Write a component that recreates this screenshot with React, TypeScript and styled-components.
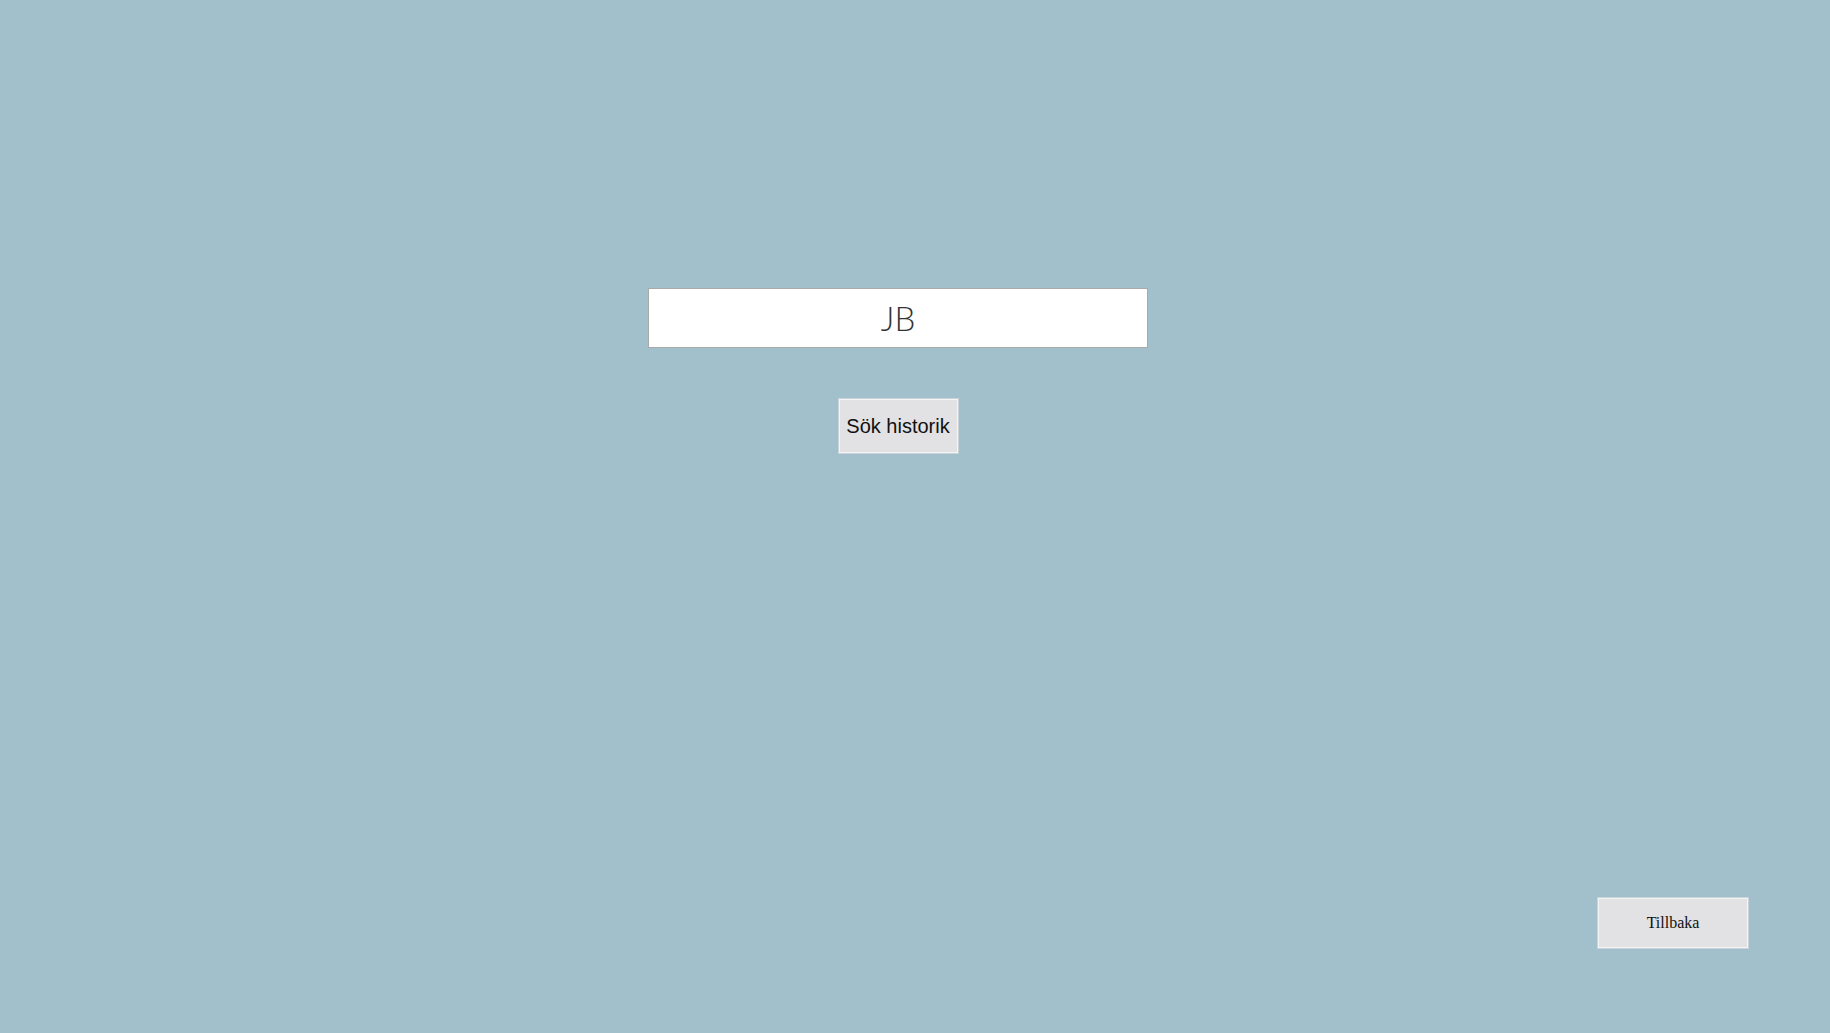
import React from "react";
import styled, { createGlobalStyle } from "styled-components";

const Global = createGlobalStyle`
  html, body { margin: 0; padding: 0; }
  body { background: #a1c0cc; }
  * { box-sizing: border-box; }
`;

const Page = styled.div`
  min-height: 100vh;
  display: flex;
  flex-direction: column;
  background: #a1c0cc;
`;

const Main = styled.main`
  flex: 1;
  display: flex;
  flex-direction: column;
  align-items: center;
  padding: 288px 34px 0 0;
  gap: 51px;
`;

const SearchInput = styled.input`
  width: 500px;
  height: 60px;
  border: 1px solid #a9a9a9;
  background: #ffffff;
  text-align: center;
  font-family: Lato, "Open Sans", "Liberation Sans", sans-serif;
  font-weight: 300;
  font-size: 33px;
  color: #333;
  outline: none;
  padding: 0;
`;

const Button = styled.button<{ $serif?: boolean }>`
  background: #e2e1e3;
  border: 1px solid #f4f4f4;
  box-shadow: 0 0 0 1px #c9d3d8;
  color: #111;
  cursor: pointer;
  padding: 0;
  font-family: ${(p) => (p.$serif ? '"Liberation Serif", serif' : '"Liberation Sans", Arial, sans-serif')};
  font-size: ${(p) => (p.$serif ? "16px" : "20px")};
`;

const SearchButton = styled(Button)`
  width: 119px;
  height: 54px;
`;

const Footer = styled.footer`
  display: flex;
  justify-content: flex-end;
  padding: 0 82px 85px 0;
`;

const BackButton = styled(Button)`
  width: 150px;
  height: 50px;
`;

export default function App() {
  return (
    <Page>
      <Global />
      <Main>
        <SearchInput defaultValue="JB" />
        <SearchButton>Sök historik</SearchButton>
      </Main>
      <Footer>
        <BackButton $serif>Tillbaka</BackButton>
      </Footer>
    </Page>
  );
}
